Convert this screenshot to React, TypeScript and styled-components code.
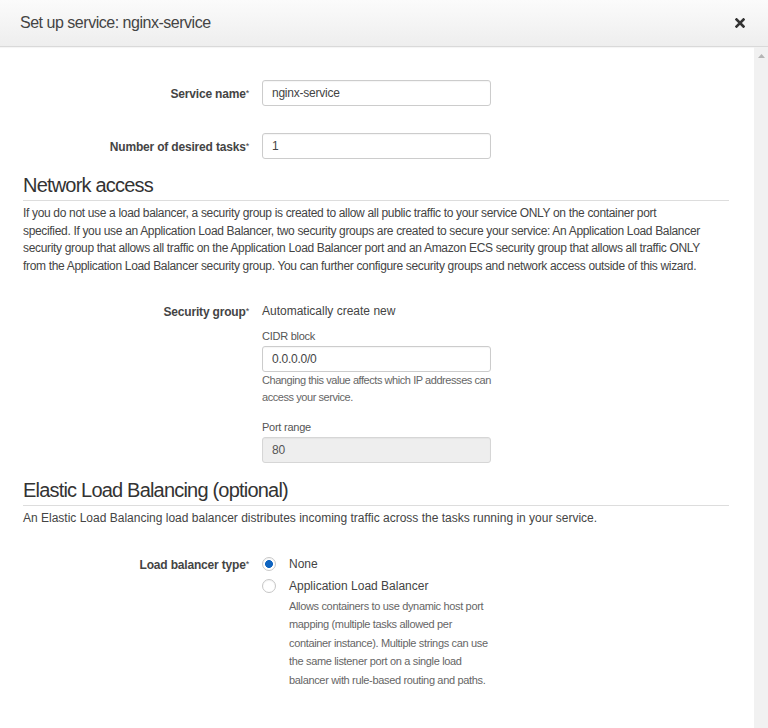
import * as React from 'react';
import styled, { createGlobalStyle } from 'styled-components';

const GlobalStyle = createGlobalStyle`
  html, body {
    margin: 0;
    padding: 0;
    background: #fff;
  }
  body {
    font-family: "Liberation Sans", Arial, sans-serif;
    color: #444;
  }
`;

const Root = styled.div`
  width: 768px;
  height: 728px;
  display: flex;
  flex-direction: column;
  overflow: hidden;
`;

const Header = styled.header`
  height: 46px;
  flex: none;
  display: flex;
  align-items: center;
  justify-content: space-between;
  padding: 0 22px 0 20px;
  background: linear-gradient(to bottom, #fbfbfb, #eeeeee);
  border-bottom: 1px solid #d9d9d9;
  box-shadow: 0 1px 1px rgba(0, 0, 0, 0.04);
`;

const Title = styled.h1`
  margin: 0;
  font-size: 16px;
  font-weight: normal;
  letter-spacing: -0.03em;
  color: #444;
`;

const CloseButton = styled.button`
  border: 0;
  background: none;
  padding: 0;
  width: 12px;
  height: 12px;
  display: flex;
  align-items: center;
  justify-content: center;
`;

const Body = styled.div`
  flex: 1;
  display: flex;
  min-height: 0;
`;

const Content = styled.main`
  flex: 1;
  padding: 33px 25px 0 23px;
  overflow: hidden;
`;

const Scrollbar = styled.div`
  width: 14px;
  flex: none;
  background: #f1f1f1;
  display: flex;
  justify-content: center;
  padding-top: 7px;
  box-sizing: border-box;
`;

const FormRow = styled.div<{ $gap?: number }>`
  display: grid;
  grid-template-columns: 226px 229px;
  column-gap: 13px;
  align-items: start;
  margin-top: ${(p) => p.$gap ?? 0}px;
`;

const FieldLabel = styled.label<{ $lh?: number }>`
  text-align: right;
  font-size: 12px;
  font-weight: bold;
  letter-spacing: -0.18px;
  color: #444;
  line-height: ${(p) => p.$lh ?? 26}px;
  sup {
    font-size: 9px;
    font-weight: normal;
    vertical-align: 2px;
  }
`;

const TextInput = styled.input<{ $disabled?: boolean }>`
  box-sizing: border-box;
  width: 229px;
  height: 26px;
  padding: 0 9px;
  border: 1px solid ${(p) => (p.$disabled ? '#d6d6d6' : '#ccc')};
  border-radius: 3px;
  background: ${(p) => (p.$disabled ? '#eeeeee' : '#fff')};
  box-shadow: inset 0 1px 1px rgba(0, 0, 0, 0.04);
  font-family: inherit;
  font-size: 12px;
  letter-spacing: -0.24px;
  color: #444;
  outline: none;
  &:disabled {
    color: #555;
  }
`;

const SectionHeading = styled.h2<{ $gap: number }>`
  margin: ${(p) => p.$gap}px 0 0;
  padding-bottom: 3px;
  border-bottom: 1px solid #dddddd;
  font-size: 20px;
  line-height: 24px;
  font-weight: normal;
  letter-spacing: -0.04em;
  color: #333;
`;

const Paragraph = styled.p<{ $tight?: boolean }>`
  margin: 4px 0 0;
  font-size: 12px;
  line-height: 17.5px;
  letter-spacing: ${(p) => (p.$tight ? '-0.33px' : '0')};
  color: #444;
`;

const Line = styled.span`
  display: block;
  white-space: nowrap;
`;

const Field = styled.div`
  display: flex;
  flex-direction: column;
`;

const StaticValue = styled.div`
  font-size: 12px;
  line-height: 18px;
  color: #444;
`;

const SubLabel = styled.div<{ $gap: number }>`
  margin-top: ${(p) => p.$gap}px;
  margin-bottom: 2px;
  font-size: 11px;
  line-height: 16px;
  letter-spacing: -0.25px;
  color: #555;
`;

const HelpText = styled.div`
  font-size: 11px;
  line-height: 17px;
  letter-spacing: -0.44px;
  color: #666;
`;

const RadioRow = styled.label`
  display: flex;
  align-items: center;
  gap: 13px;
  height: 22px;
  font-size: 12px;
  color: #444;
`;

const RadioDot = styled.span<{ $checked?: boolean }>`
  box-sizing: border-box;
  width: 14px;
  height: 14px;
  border-radius: 50%;
  border: 1px solid ${(p) => (p.$checked ? '#c8c8c8' : '#c6c6c6')};
  background: ${(p) =>
    p.$checked ? 'radial-gradient(circle, #0f64c0 0 3.6px, #fff 4.3px)' : '#fff'};
  box-shadow: inset 0 1px 1px rgba(0, 0, 0, 0.05);
  flex: none;
`;

const RadioDesc = styled.div`
  padding-left: 27px;
  font-size: 11px;
  line-height: 18.5px;
  letter-spacing: -0.34px;
  color: #666;
`;

function Required({ children }: { children: React.ReactNode }) {
  return (
    <>
      {children}
      <sup>*</sup>
    </>
  );
}

const networkLines = [
  'If you do not use a load balancer, a security group is created to allow all public traffic to your service ONLY on the container port',
  'specified. If you use an Application Load Balancer, two security groups are created to secure your service: An Application Load Balancer',
  'security group that allows all traffic on the Application Load Balancer port and an Amazon ECS security group that allows all traffic ONLY',
  'from the Application Load Balancer security group. You can further configure security groups and network access outside of this wizard.',
];

export default function App() {
  return (
    <>
      <GlobalStyle />
      <Root>
        <Header>
          <Title>Set up service: nginx-service</Title>
          <CloseButton aria-label="Close">
            <svg width="10" height="10" viewBox="0 0 10 10">
              <path d="M1.5 1.5 L8.5 8.5 M8.5 1.5 L1.5 8.5" stroke="#333" strokeWidth="2.6" strokeLinecap="square" />
            </svg>
          </CloseButton>
        </Header>
        <Body>
          <Content>
            <FormRow>
              <FieldLabel><Required>Service name</Required></FieldLabel>
              <TextInput defaultValue="nginx-service" />
            </FormRow>
            <FormRow $gap={26}>
              <FieldLabel><Required>Number of desired tasks</Required></FieldLabel>
              <TextInput defaultValue="1" />
            </FormRow>

            <SectionHeading $gap={13}>Network access</SectionHeading>
            <Paragraph $tight>
              {networkLines.map((line) => (
                <Line key={line}>{line}</Line>
              ))}
            </Paragraph>

            <FormRow $gap={27}>
              <FieldLabel $lh={18}><Required>Security group</Required></FieldLabel>
              <Field>
                <StaticValue>Automatically create new</StaticValue>
                <SubLabel $gap={8}>CIDR block</SubLabel>
                <TextInput defaultValue="0.0.0.0/0" />
                <HelpText>Changing this value affects which IP addresses can access your service.</HelpText>
                <SubLabel $gap={13}>Port range</SubLabel>
                <TextInput $disabled disabled defaultValue="80" />
              </Field>
            </FormRow>

            <SectionHeading $gap={15}>Elastic Load Balancing (optional)</SectionHeading>
            <Paragraph>
              An Elastic Load Balancing load balancer distributes incoming traffic across the tasks running in your
              service.
            </Paragraph>

            <FormRow $gap={25}>
              <FieldLabel $lh={22}><Required>Load balancer type</Required></FieldLabel>
              <Field>
                <RadioRow>
                  <RadioDot $checked />
                  None
                </RadioRow>
                <RadioRow>
                  <RadioDot />
                  Application Load Balancer
                </RadioRow>
                <RadioDesc>
                  Allows containers to use dynamic host port mapping (multiple tasks allowed per container instance).
                  Multiple strings can use the same listener port on a single load balancer with rule-based routing
                  and paths.
                </RadioDesc>
              </Field>
            </FormRow>
          </Content>
          <Scrollbar>
            <svg width="7" height="4" viewBox="0 0 7 4">
              <path d="M0 4 L3.5 0 L7 4 Z" fill="#b5b5b5" />
            </svg>
          </Scrollbar>
        </Body>
      </Root>
    </>
  );
}
